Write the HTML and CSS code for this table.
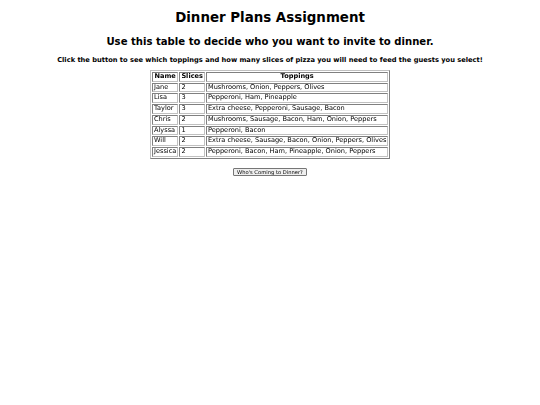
FILE: index.html
```html
<!DOCTYPE html>
<html>
<head>
<meta charset="utf-8">
<title>Dinner Plans Assignment</title>
<link rel="stylesheet" href="styles.css">
</head>
<body>
<div class="page">
  <h1 class="title">Dinner Plans Assignment</h1>
  <h2 class="subtitle">Use this table to decide who you want to invite to dinner.</h2>
  <p class="intro">Click the button to see which toppings and how many slices of pizza you will need to feed the guests you select!</p>
  <table class="guests">
    <tr><th>Name</th><th>Slices</th><th>Toppings</th></tr>
    <tr><td>Jane</td><td>2</td><td>Mushrooms, Onion, Peppers, Olives</td></tr>
    <tr><td>Lisa</td><td>3</td><td>Pepperoni, Ham, Pineapple</td></tr>
    <tr><td>Taylor</td><td>3</td><td>Extra cheese, Pepperoni, Sausage, Bacon</td></tr>
    <tr><td>Chris</td><td>2</td><td>Mushrooms, Sausage, Bacon, Ham, Onion, Peppers</td></tr>
    <tr><td>Alyssa</td><td>1</td><td>Pepperoni, Bacon</td></tr>
    <tr><td>Will</td><td>2</td><td>Extra cheese, Sausage, Bacon, Onion, Peppers, Olives</td></tr>
    <tr><td>Jessica</td><td>2</td><td>Pepperoni, Bacon, Ham, Pineapple, Onion, Peppers</td></tr>
  </table>
  <div class="actions"><button class="btn">Who's Coming to Dinner?</button></div>
</div>
</body>
</html>
```
FILE: styles.css
```css
html, body { margin: 0; padding: 0; background: #fff; }
body { font-family: "DejaVu Sans", Verdana, sans-serif; color: #000; }
.page { padding-top: 9px; text-align: center; }
.title { font-size: 13.4px; font-weight: bold; margin: 0; line-height: 17px; }
.subtitle { font-size: 10.1px; font-weight: bold; margin: 9px 0 0; line-height: 14px; }
.intro { font-size: 6.7px; font-weight: bold; margin: 7px 0 0; line-height: 9px; }
.guests {
  margin: 5px auto 0;
  border: 1px solid #888;
  border-color: #c0c0c0 #808080 #808080 #c0c0c0;
  border-spacing: 1px;
  font-size: 6.6px;
  text-align: left;
  will-change: transform;
}
.guests th, .guests td {
  border: 1px solid #808080;
  border-color: #808080 #c0c0c0 #c0c0c0 #808080;
  padding: 0 1px;
  line-height: 7.7px;
}
.guests th { text-align: center; font-weight: bold; }
.actions { margin-top: 9px; display: flex; justify-content: center; }
.btn {
  font-family: "DejaVu Sans", sans-serif;
  font-size: 5.2px;
  line-height: 6px;
  padding: 0 3px;
  background: #efefef;
  border: 1px solid #767676;
  border-radius: 1px;
  will-change: transform;
}
```
